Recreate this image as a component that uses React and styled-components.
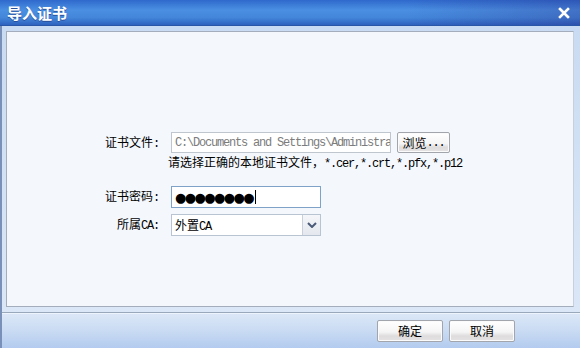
import React from 'react'
import styled, { createGlobalStyle } from 'styled-components'

const GlobalStyle = createGlobalStyle`
  html, body {
    margin: 0;
    padding: 0;
    width: 580px;
    height: 348px;
    overflow: hidden;
    background: #fff;
  }
  body {
    font-family: "Noto Sans CJK SC", "Liberation Sans", sans-serif;
    font-size: 12px;
  }
`

const App = () => (
  <Window>
    <GlobalStyle />
    <TitleBar>
      <Title>导入证书</Title>
      <Close aria-label="close">
        <svg width="12" height="12" viewBox="0 0 12 12">
          <path d="M2 2 L10 10 M10 2 L2 10" stroke="#fff" strokeWidth="2.6" strokeLinecap="square" />
        </svg>
      </Close>
    </TitleBar>
    <Body>
      <Panel>
        <Form>
          <Row>
            <Label>证书文件<Ascii>:</Ascii></Label>
            <Field width={220} disabled>
              <Ascii>C:\Documents and Settings\Administra</Ascii>
            </Field>
            <Button width={53} left={6}>浏览<Ascii>...</Ascii></Button>
          </Row>
          <Hint>
            请选择正确的本地证书文件，<Ascii>*.cer,*.crt,*.pfx,*.p12</Ascii>
          </Hint>
          <Row top={14}>
            <Label>证书密码<Ascii>:</Ascii></Label>
            <Field width={150} focused>
              <Dots>●●●●●●●●</Dots>
              <Caret />
            </Field>
          </Row>
          <Row top={6}>
            <Label>所属<Ascii>CA:</Ascii></Label>
            <Select>
              <SelectText>外置<Ascii>CA</Ascii></SelectText>
              <Arrow>
                <svg width="10" height="6" viewBox="0 0 10 6">
                  <path d="M1 1 L5 5 L9 1" stroke="#4a5a78" strokeWidth="2" fill="none" />
                </svg>
              </Arrow>
            </Select>
          </Row>
        </Form>
      </Panel>
    </Body>
    <Footer>
      <Button width={66} height={22}>确定</Button>
      <Button width={66} height={22} left={6}>取消</Button>
    </Footer>
  </Window>
)

export default App

// Styles
const Window = styled.div`
  width: 580px;
  height: 348px;
  display: flex;
  flex-direction: column;
  box-sizing: border-box;
  border-left: 2px solid #7990b8;
  background: #d3e2f5;
`

const TitleBar = styled.div`
  height: 25px;
  flex: none;
  margin-left: -2px;
  display: flex;
  align-items: center;
  justify-content: space-between;
  padding: 0 10px 0 7px;
  background:
    linear-gradient(90deg, rgba(0, 0, 0, 0) 70%, rgba(40, 30, 120, 0.25) 100%),
    linear-gradient(180deg, #2f69cc 0%, #4a8fe2 40%, #4386da 70%, #2e62c0 100%);
  border-bottom: 1px solid #2a56a8;
`

const Title = styled.div`
  color: #fff;
  font-size: 15px;
  font-weight: bold;
  text-shadow: 0 1px 0 #2a4f9a;
`

const Close = styled.div`
  display: flex;
  align-items: center;
`

const Body = styled.div`
  flex: 1;
  display: flex;
  padding: 5px 6px 5px 4px;
  background: linear-gradient(180deg, #c9dbf2 0%, #dbe7f7 100%);
  border-bottom: 1px solid #9aa8bc;
`

const Panel = styled.div`
  flex: 1;
  box-sizing: border-box;
  background: #f4f8fd;
  border: 1px solid #a4adbc;
  border-right-color: #c8d0dc;
  padding-top: 100px;
`

const Form = styled.div`
  display: flex;
  flex-direction: column;
  padding-left: 83px;
`

const Row = styled.div`
  display: flex;
  align-items: center;
  margin-top: ${p => p.top || 0}px;
`

const Label = styled.div`
  width: 69px;
  margin-right: 12px;
  text-align: right;
  color: #000;
  line-height: 16px;
`

const Ascii = styled.span`
  font-family: "Liberation Mono", "DejaVu Sans Mono", monospace;
  font-size: 12px;
  letter-spacing: -1.2px;
`

const Field = styled.div`
  width: ${p => p.width}px;
  height: ${p => (p.focused ? 22 : 21)}px;
  box-sizing: border-box;
  display: flex;
  align-items: center;
  padding-left: 3px;
  overflow: hidden;
  white-space: nowrap;
  background: #fff;
  color: ${p => (p.disabled ? '#7c7c7c' : '#000')};
  border: 1px solid ${p => (p.focused ? '#7fa3c8' : '#c0c6ce')};
`

const Dots = styled.span`
  font-family: "DejaVu Sans", sans-serif;
  font-size: 13px;
  letter-spacing: -1.6px;
  color: #000;
`

const Caret = styled.span`
  width: 1px;
  height: 14px;
  margin-left: 2px;
  background: #000;
`

const Hint = styled.div`
  margin: 1px 0 0 78px;
  line-height: 16px;
  color: #000;
`

const Select = styled.div`
  width: 150px;
  height: 22px;
  box-sizing: border-box;
  display: flex;
  background: #fff;
  border: 1px solid #b8c4d2;
`

const SelectText = styled.div`
  flex: 1;
  line-height: 20px;
  padding-left: 3px;
  color: #000;
`

const Arrow = styled.div`
  width: 17px;
  display: flex;
  align-items: center;
  justify-content: center;
  border-left: 1px solid #c8d0da;
  background: linear-gradient(180deg, #f4f6f9 0%, #e4e8ee 100%);
`

const Button = styled.div`
  width: ${p => p.width}px;
  height: ${p => p.height || 21}px;
  margin-left: ${p => p.left || 0}px;
  box-sizing: border-box;
  display: flex;
  align-items: center;
  justify-content: center;
  color: #000;
  border: 1px solid #a2a6ac;
  border-radius: 2px;
  background: linear-gradient(180deg, #ffffff 0%, #f6f5f5 55%, #dedcdc 75%, #e4e2e2 100%);
  box-shadow: inset 0 0 0 1px #fbfbfb;
`

const Footer = styled.div`
  height: 35px;
  flex: none;
  box-sizing: border-box;
  display: flex;
  align-items: center;
  justify-content: flex-end;
  padding: 0 65px 1px 0;
  border-top: 1px solid #eef4fb;
  background: linear-gradient(180deg, #dbe7f7 0%, #c9dbf3 50%, #b3cbef 100%);
`
